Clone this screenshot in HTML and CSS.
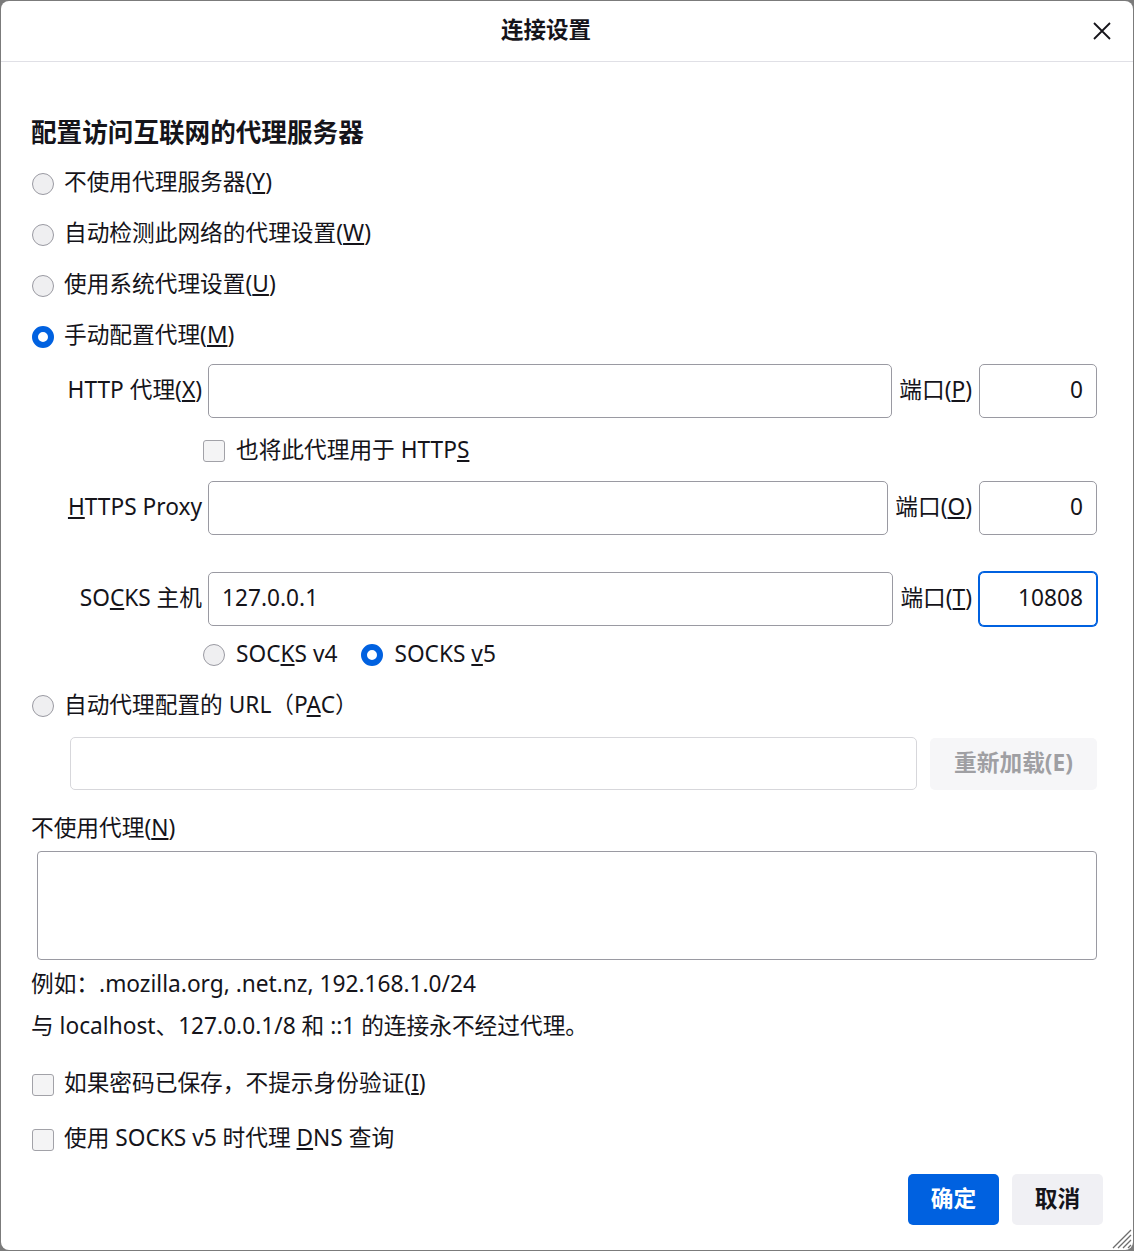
FILE: index.html
```html
<!DOCTYPE html>
<html lang="zh-CN">
<head>
<meta charset="utf-8">
<title>连接设置</title>
<link rel="stylesheet" href="styles.css">
</head>
<body>
<div class="dialog">
  <div class="header">
    <div class="title">连接设置</div>
    <svg class="close" width="20" height="20" viewBox="0 0 20 20"><path d="M2 2 L18 18 M18 2 L2 18" stroke="#15141a" stroke-width="1.8" fill="none"/></svg>
  </div>
  <div class="content">
    <div class="heading">配置访问互联网的代理服务器</div>
    <div class="radio-row first"><span class="radio"></span><span class="txt">不使用代理服务器(<u>Y</u>)</span></div>
    <div class="radio-row"><span class="radio"></span><span class="txt">自动检测此网络的代理设置(<u>W</u>)</span></div>
    <div class="radio-row"><span class="radio"></span><span class="txt">使用系统代理设置(<u>U</u>)</span></div>
    <div class="radio-row"><span class="radio checked"></span><span class="txt">手动配置代理(<u>M</u>)</span></div>

    <div class="proxy-row http">
      <span class="plabel txt">HTTP 代理(<u>X</u>)</span>
      <span class="input grow"></span>
      <span class="portlabel txt">端口(<u>P</u>)</span>
      <span class="input port">0</span>
    </div>
    <div class="check-row indent"><span class="checkbox"></span><span class="txt">也将此代理用于 HTTP<u>S</u></span></div>
    <div class="proxy-row">
      <span class="plabel txt"><u>H</u>TTPS Proxy</span>
      <span class="input grow"></span>
      <span class="portlabel txt">端口(<u>O</u>)</span>
      <span class="input port">0</span>
    </div>
    <div class="proxy-row socks">
      <span class="plabel txt">SO<u>C</u>KS 主机</span>
      <span class="input grow">127.0.0.1</span>
      <span class="portlabel txt">端口(<u>T</u>)</span>
      <span class="input port focused">10808</span>
    </div>
    <div class="version-row">
      <span class="radio"></span><span class="vtext txt">SOC<u>K</u>S v4</span>
      <span class="radio checked"></span><span class="vtext txt">SOCKS <u>v</u>5</span>
    </div>
    <div class="radio-row pac"><span class="radio"></span><span class="txt">自动代理配置的 URL（P<u>A</u>C）</span></div>
    <div class="pac-input-row">
      <span class="input disabled grow"></span>
      <span class="reload">重新加载(E)</span>
    </div>
    <div class="noproxy-label">不使用代理(<u>N</u>)</div>
    <div class="textarea"></div>
    <div class="note">例如：.mozilla.org, .net.nz, 192.168.1.0/24</div>
    <div class="note">与 localhost、127.0.0.1/8 和 ::1 的连接永不经过代理。</div>
    <div class="check-row bottom first-bottom"><span class="checkbox"></span><span class="txt">如果密码已保存，不提示身份验证(<u>I</u>)</span></div>
    <div class="check-row bottom"><span class="checkbox"></span><span class="txt">使用 SOCKS v5 时代理 <u>D</u>NS 查询</span></div>
    <div class="footer">
      <span class="btn primary">确定</span>
      <span class="btn secondary">取消</span>
    </div>
  </div>
  <svg class="grip" width="24" height="24" viewBox="0 0 24 24">
    <path d="M23 5 L5 23 M23 10 L10 23 M23 15 L15 23 M23 20 L20 23" stroke="#6e6e6e" stroke-width="1.3" fill="none"/>
  </svg>
</div>
</body>
</html>
```
FILE: styles.css
```css
html, body {
  margin: 0;
  padding: 0;
}
body {
  background: #7b7b7b;
  padding: 1px;
  font-family: "Noto Sans", "Noto Sans CJK SC", sans-serif;
  font-size: 22.7px;
  line-height: 30px;
  color: #15141a;
}
.dialog {
  position: relative;
  background: #ffffff;
  height: 1249px;
  border-radius: 8px;
  overflow: hidden;
}
.header {
  position: relative;
  height: 60px;
  border-bottom: 1px solid #e0e0e6;
  display: flex;
  align-items: center;
  justify-content: center;
  padding-right: 42px;
}
.title {
  font-weight: 700;
  font-size: 22.5px;
  padding-bottom: 2px;
}
.close {
  position: absolute;
  right: 21px;
  top: 20px;
}
.content {
  padding: 54px 36px 0 30px;
  display: flex;
  flex-direction: column;
}
.heading {
  font-size: 25.6px;
  font-weight: 700;
  line-height: 34px;
}
.txt {
  padding-bottom: 3px;
}
.radio-row {
  height: 51px;
  display: flex;
  align-items: center;
  gap: 10px;
}
.radio-row.first {
  margin-top: 8px;
}
.radio {
  width: 22px;
  height: 22px;
  box-sizing: border-box;
  border-radius: 50%;
  border: 1px solid #9a9aa2;
  background: #efeff1;
  margin-left: 1px;
  flex: none;
}
.radio.checked {
  border: 6px solid #0061e0;
  background: #ffffff;
}
.checkbox {
  width: 22px;
  height: 22px;
  box-sizing: border-box;
  border-radius: 3px;
  border: 1px solid #a2a2a8;
  background: #f4f4f5;
  margin-left: 1px;
  flex: none;
}
.proxy-row {
  height: 54px;
  display: flex;
  align-items: center;
}
.proxy-row.http {
  margin-top: 2px;
}
.proxy-row.socks {
  margin-top: 37px;
}
.plabel {
  width: 171px;
  text-align: right;
  flex: none;
  margin-right: 6px;
  white-space: nowrap;
}
.input {
  height: 54px;
  box-sizing: border-box;
  border: 1px solid #9a9aa2;
  border-radius: 5px;
  background: #fff;
  display: flex;
  align-items: center;
  padding: 0 13px 2px;
}
.input.grow {
  flex: 1;
}
.portlabel {
  margin: 0 7px;
  flex: none;
}
.input.port {
  width: 118px;
  flex: none;
  justify-content: flex-end;
}
.input.focused {
  border-color: #0061e0;
  box-shadow: 0 0 0 1px #0061e0;
}
.check-row {
  display: flex;
  align-items: center;
  gap: 10px;
}
.check-row.indent {
  height: 63px;
  padding-top: 3px;
  box-sizing: border-box;
  margin-left: 172px;
}
.check-row.indent .checkbox {
  margin-left: 0;
}
.check-row.indent span + span {
  margin-left: 1px;
}
.version-row {
  height: 58px;
  display: flex;
  align-items: center;
  margin-left: 172px;
}
.version-row .radio {
  margin-left: 0;
}
.vtext {
  margin-left: 11px;
  margin-right: 24px;
}
.radio-row.pac {
  height: 44px;
}
.pac-input-row {
  margin-top: 9px;
  margin-left: 39px;
  display: flex;
  align-items: flex-end;
  gap: 13px;
  height: 53px;
}
.input.disabled {
  height: 53px;
  border-color: #d7d7db;
}
.reload {
  width: 167px;
  height: 52px;
  border-radius: 5px;
  background: #f6f6f8;
  color: #9f9fa3;
  font-weight: 700;
  display: flex;
  align-items: center;
  justify-content: center;
  flex: none;
  padding-bottom: 2px;
  box-sizing: border-box;
}
.noproxy-label {
  margin-top: 20px;
  line-height: 36px;
  padding-bottom: 3px;
  height: 36px;
  box-sizing: border-box;
}
.textarea {
  margin-top: 5px;
  margin-left: 6px;
  height: 109px;
  box-sizing: border-box;
  border: 1px solid #9a9aa2;
  border-radius: 4px;
}
.note {
  line-height: 42px;
  height: 42px;
}
.textarea + .note {
  margin-top: 3px;
}
.check-row.bottom {
  height: 55px;
}
.check-row.first-bottom {
  margin-top: 10px;
}
.footer {
  margin-top: 7px;
  margin-right: -6px;
  display: flex;
  justify-content: flex-end;
  gap: 13px;
}
.btn {
  width: 91px;
  height: 51px;
  border-radius: 5px;
  font-weight: 700;
  display: flex;
  align-items: center;
  justify-content: center;
  padding-bottom: 2px;
  box-sizing: border-box;
}
.btn.primary {
  background: #0061e0;
  color: #ffffff;
}
.btn.secondary {
  background: #f0f0f4;
  color: #15141a;
}
.grip {
  position: absolute;
  right: 1px;
  bottom: 1px;
}
```
